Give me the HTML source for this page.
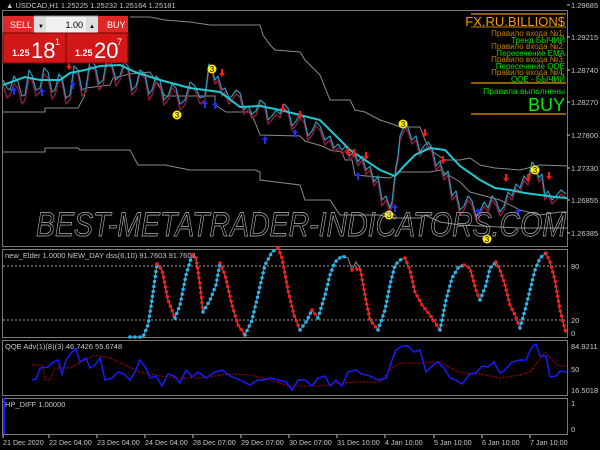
<!DOCTYPE html>
<html><head><meta charset="utf-8"><style>
html,body{margin:0;padding:0;background:#000;width:600px;height:450px;overflow:hidden;font-family:"Liberation Sans",sans-serif}
svg{position:absolute;left:0;top:0}
.t{font-family:"Liberation Sans","Noto Sans CJK SC",sans-serif}
</style></head><body>
<svg width="600" height="450" viewBox="0 0 600 450" xmlns="http://www.w3.org/2000/svg">
<rect width="600" height="450" fill="#000"/>
<g fill="none" stroke="#7a7a7a" stroke-width="1">
<rect x="2.5" y="10.5" width="565" height="236"/>
<rect x="2.5" y="249.5" width="565" height="88"/>
<rect x="2.5" y="340.5" width="565" height="55"/>
<rect x="2.5" y="398.5" width="565" height="36"/>
</g>
<text x="6" y="8" font-size="7.5" fill="#c8c8c8" class="t">▲ USDCAD,H1  1.25225 1.25232 1.25164 1.25181</text>
<g font-size="7.5" fill="#c8c8c8" class="t">
<text x="571" y="8">1.29685</text><text x="571" y="40">1.29215</text><text x="571" y="73">1.28740</text>
<text x="571" y="105">1.28270</text><text x="571" y="138">1.27800</text><text x="571" y="171">1.27330</text>
<text x="571" y="203">1.26855</text><text x="571" y="236">1.26385</text>
<text x="571" y="269">80</text><text x="571" y="323">20</text><text x="571" y="336">0</text>
<text x="571" y="349">84.9211</text><text x="571" y="372">50</text><text x="571" y="393">16.5018</text>
<text x="571" y="406">1</text><text x="571" y="432">0</text>
</g>
<g stroke="#c8c8c8"><line x1="567" y1="5" x2="570" y2="5"/><line x1="567" y1="37" x2="570" y2="37"/><line x1="567" y1="70" x2="570" y2="70"/><line x1="567" y1="102" x2="570" y2="102"/><line x1="567" y1="135" x2="570" y2="135"/><line x1="567" y1="168" x2="570" y2="168"/><line x1="567" y1="200" x2="570" y2="200"/><line x1="567" y1="233" x2="570" y2="233"/></g>
<g font-size="7.2" fill="#c8c8c8" class="t">
<text x="3" y="445">21 Dec 2020</text><text x="49" y="445">22 Dec 04:00</text><text x="97" y="445">23 Dec 04:00</text>
<text x="145" y="445">24 Dec 04:00</text><text x="193" y="445">28 Dec 07:00</text><text x="241" y="445">29 Dec 07:00</text>
<text x="289" y="445">30 Dec 07:00</text><text x="337" y="445">31 Dec 10:00</text><text x="385" y="445">4 Jan 10:00</text>
<text x="434" y="445">5 Jan 10:00</text><text x="482" y="445">6 Jan 10:00</text><text x="530" y="445">7 Jan 10:00</text>
</g>
<g stroke="#c8c8c8"><line x1="3" y1="435" x2="3" y2="438"/><line x1="49" y1="435" x2="49" y2="438"/><line x1="97" y1="435" x2="97" y2="438"/><line x1="145" y1="435" x2="145" y2="438"/><line x1="193" y1="435" x2="193" y2="438"/><line x1="241" y1="435" x2="241" y2="438"/><line x1="289" y1="435" x2="289" y2="438"/><line x1="337" y1="435" x2="337" y2="438"/><line x1="385" y1="435" x2="385" y2="438"/><line x1="434" y1="435" x2="434" y2="438"/><line x1="482" y1="435" x2="482" y2="438"/><line x1="530" y1="435" x2="530" y2="438"/></g>

<g fill="none" stroke="#8a8a8a" stroke-width="1">
<polyline points="3,112 45,112 45,108 78,108 84,97 86,88 110,85 113,78 130,74 150,72 165,96 200,96 215,96 215,105 226,112 250,112 255,122 260,135 300,136 305,141 322,146 330,150 342,152 345,160 352,160 355,175 390,178 400,172 430,172 440,170 460,182 470,192 500,200 520,210 540,215 560,212 567,212"/>
<polyline points="130,17 150,17 165,20 190,22 210,25 260,25 263,35 270,45 275,50 300,52 305,60 320,75 330,100 350,100 355,110 365,112 380,120 395,125 400,127 420,127 425,140 430,150 445,160 460,160 470,158 480,165 495,168 520,170 540,165 567,166"/>
<polyline points="3,152 45,152 45,148 78,148 80,150 130,150 138,165 165,165 190,170 255,170 260,172 260,180 300,185 305,200 330,200 340,215 380,215 390,218 420,218 425,215 440,222 460,225 480,226 520,228 567,228"/>
</g>
<g fill="none" stroke-linejoin="round">
<polyline stroke="#8b1a3a" stroke-width="1.5" points="3,85 7,98 10,95 14,84 18,88 22,104 25,100 29,78 32,80 36,96 40,92 44,74 48,78 52,99 55,95 59,80 62,82 66,104 70,100 74,72 78,75 82,96 86,92 90,66 95,70 99,90 103,85 107,62 112,68 116,86 120,80 124,66 128,70 132,95 136,90 140,74 145,78 149,100 152,95 156,82 160,85 164,105 168,100 172,88 176,92 180,110 185,105 190,86 195,90 200,104 205,100 209,68 212,72 215,84 218,80 222,96 225,92 229,104 232,100 236,94 240,97 244,114 248,110 252,118 256,115 260,104 265,108 268,124 272,120 276,114 280,118 284,108 288,112 292,130 296,125 300,118 304,122 308,140 312,135 316,126 320,130 325,145 330,140 334,152 338,148 342,154 346,150 350,160 354,155 358,166 362,160 366,174 370,170 374,186 378,180 382,206 386,200 390,212 392,206 396,170 398,160 400,140 402,135 406,128 408,132 412,144 416,140 420,156 424,150 428,146 432,152 436,170 440,165 444,180 448,175 452,200 456,195 460,215 464,210 468,200 472,205 476,220 480,215 484,206 488,212 492,200 496,205 500,216 504,210 508,196 512,200 516,188 520,192 524,180 528,185 532,166 536,172 539,182 542,178 545,200 548,195 552,204 556,200 561,194 566,198"/>
<polyline stroke="#2a9ab8" stroke-width="1.2" points="3,80 7,88 10,90 14,76 18,82 22,96 25,95 29,70 32,75 36,90 40,88 44,68 48,72 52,92 55,90 59,74 62,78 66,98 70,95 74,66 78,70 82,90 86,88 90,60 95,65 99,84 103,80 107,58 112,65 116,80 120,76 124,62 128,66 132,90 136,86 140,70 145,74 149,94 152,90 156,76 160,80 164,100 168,96 172,84 176,88 180,104 185,100 190,82 195,86 200,98 205,96 209,64 212,68 215,80 218,76 222,90 225,88 229,98 232,96 236,90 240,93 244,110 248,106 252,114 256,111 260,100 265,104 268,120 272,116 276,110 280,114 284,104 288,108 292,126 296,121 300,114 304,118 308,136 312,131 316,122 320,126 325,140 330,136 334,148 338,144 342,150 346,146 350,156 354,151 358,162 362,156 366,170 370,166 374,182 378,176 382,200 386,196 390,208 392,202 396,166 398,156 400,136 402,131 406,124 408,128 412,140 416,136 420,152 424,146 428,142 432,148 436,166 440,161 444,176 448,171 452,196 456,191 460,210 464,206 468,196 472,201 476,216 480,211 484,202 488,208 492,196 496,201 500,212 504,206 508,192 512,196 516,184 520,188 524,176 528,181 532,162 536,168 539,178 542,174 545,196 548,191 552,200 556,196 561,190 566,194"/>
</g>
<polyline fill="none" stroke="#20c8d0" stroke-width="2" points="3,85 25,77 40,80 60,80 70,73 85,70 100,66 120,65 135,72 160,80 190,88 220,92 240,107 260,106 280,110 300,115 320,120 335,135 350,150 365,160 380,170 395,176 405,165 415,155 430,148 445,150 460,166 480,180 495,188 510,190 525,193 540,195 555,197 567,198"/>
<g fill="#1e2cff">
<path d="M11,91 l3,-4 3,4 h-2 v4 h-2 v-4z"/><path d="M39,92 l3,-4 3,4 h-2 v4 h-2 v-4z"/><path d="M70,85 l3,-4 3,4 h-2 v4 h-2 v-4z"/>
<path d="M202,104 l3,-4 3,4 h-2 v4 h-2 v-4z"/><path d="M212,105 l3,-4 3,4 h-2 v4 h-2 v-4z"/><path d="M262,140 l3,-4 3,4 h-2 v4 h-2 v-4z"/>
<path d="M292,133 l3,-4 3,4 h-2 v4 h-2 v-4z"/><path d="M355,176 l3,-4 3,4 h-2 v4 h-2 v-4z"/><path d="M392,208 l3,-4 3,4 h-2 v4 h-2 v-4z"/>
<path d="M475,212 l3,-4 3,4 h-2 v4 h-2 v-4z"/><path d="M515,212 l3,-4 3,4 h-2 v4 h-2 v-4z"/>
</g>
<g fill="#ff1818">
<path d="M66,66 l3,4 3,-4 h-2 v-4 h-2 v4z"/><path d="M219,73 l3,4 3,-4 h-2 v-4 h-2 v4z"/><path d="M280,108 l3,4 3,-4 h-2 v-4 h-2 v4z"/>
<path d="M297,115 l3,4 3,-4 h-2 v-4 h-2 v4z"/><path d="M345,152 l3,4 3,-4 h-2 v-4 h-2 v4z"/><path d="M351,153 l3,4 3,-4 h-2 v-4 h-2 v4z"/>
<path d="M363,156 l3,4 3,-4 h-2 v-4 h-2 v4z"/><path d="M422,133 l3,4 3,-4 h-2 v-4 h-2 v4z"/><path d="M440,160 l3,4 3,-4 h-2 v-4 h-2 v4z"/>
<path d="M503,178 l3,4 3,-4 h-2 v-4 h-2 v4z"/><path d="M525,178 l3,4 3,-4 h-2 v-4 h-2 v4z"/><path d="M546,176 l3,4 3,-4 h-2 v-4 h-2 v4z"/>
</g>
<g fill="#ffee00">
<circle cx="212" cy="69" r="4.5"/><circle cx="177" cy="115" r="4.5"/><circle cx="403" cy="124" r="4.5"/><circle cx="389" cy="215" r="4.5"/>
<circle cx="487" cy="239" r="4.5"/><circle cx="535" cy="170" r="4.5"/>
</g>
<g fill="#000" font-size="8" class="t" text-anchor="middle">
<text x="212" y="72">3</text><text x="177" y="118">3</text><text x="403" y="127">3</text><text x="389" y="218">3</text><text x="487" y="242">3</text><text x="535" y="173">3</text>
</g>
<text x="36" y="236" font-size="34" font-style="italic" fill="none" stroke="#b8b8b8" stroke-width="0.7" textLength="530" lengthAdjust="spacingAndGlyphs" class="t">BEST-METATRADER-INDICATORS.COM</text>

<g stroke="#c08000" stroke-width="1.5">
<line x1="471" y1="14" x2="566" y2="14"/><line x1="471" y1="83" x2="566" y2="83"/><line x1="471" y1="114" x2="566" y2="114"/>
<line x1="471" y1="27" x2="566" y2="27" stroke-width="1"/>
</g>
<g class="t" text-anchor="end">
<text x="565" y="26" font-size="13" fill="#ff9900">FX.RU.BILLION$</text>
<text x="565" y="36" font-size="8" fill="#c08000">Правило входа №1:</text>
<text x="565" y="43" font-size="8" fill="#00e000">Тренд БЫЧИЙ</text>
<text x="565" y="49" font-size="8" fill="#c08000">Правило входа №2:</text>
<text x="565" y="56" font-size="8" fill="#00e000">Пересечение EMA</text>
<text x="565" y="62" font-size="8" fill="#c08000">Правило входа №3:</text>
<text x="565" y="69" font-size="8" fill="#00e000">Пересечение QQE</text>
<text x="565" y="75" font-size="8" fill="#c08000">Правило входа №4:</text>
<text x="565" y="82" font-size="8" fill="#00e000">QQE - БЫЧИЙ</text>
<text x="565" y="94" font-size="8.5" fill="#00e000">Правила выполнены</text>
<text x="565" y="111" font-size="18" fill="#00f000">BUY</text>
</g>

<rect x="3" y="16" width="31" height="17" fill="#e02828"/>
<rect x="34" y="16" width="64" height="17" fill="#f0f0f0" stroke="#888"/>
<rect x="34" y="17" width="12" height="15" fill="#ddd"/><rect x="86" y="17" width="12" height="15" fill="#ddd"/>
<rect x="98" y="16" width="30" height="17" fill="#e02828"/>
<rect x="3" y="33" width="63" height="30" fill="#d01818" stroke="#7a0000"/>
<rect x="66" y="33" width="62" height="30" fill="#d01818" stroke="#7a0000"/>
<g class="t" fill="#fff">
<text x="10" y="28" font-size="9">SELL</text><text x="107" y="28" font-size="9">BUY</text>
<text x="38" y="28" font-size="6" fill="#000">▼</text><text x="89" y="28" font-size="6" fill="#000">▲</text>
<text x="83" y="28" font-size="9" fill="#000" text-anchor="end">1.00</text>
<text x="12" y="56" font-size="9" font-weight="bold">1.25</text><text x="31" y="58" font-size="22">18</text><text x="55" y="45" font-size="9">1</text>
<text x="75" y="56" font-size="9" font-weight="bold">1.25</text><text x="94" y="58" font-size="22">20</text><text x="117" y="45" font-size="9">7</text>
</g>

<text x="5" y="258" font-size="7.5" fill="#c8c8c8" class="t">new_Elder 1.0000  NEW_DAY dss(6,10) 91.7603 91.7603</text>
<g stroke="#aaa" stroke-dasharray="2,2"><line x1="3" y1="266" x2="567" y2="266"/><line x1="3" y1="320" x2="567" y2="320"/></g>
<polyline fill="none" stroke="#888" stroke-width="1" points="130,337 143,337 148,325 152,300 157,264 162,270 168,300 175,318 180,305 186,275 192,255 196,258 200,285 203,312 210,300 216,285 220,263 225,275 232,305 238,325 245,335 252,320 258,295 265,265 272,252 278,248 282,258 288,290 294,315 300,330 306,322 312,310 318,318 325,295 330,275 335,262 342,256 348,258 352,270 356,262 360,268 365,295 370,320 378,330 385,310 390,285 395,265 400,260 405,258 410,270 415,292 422,305 430,315 440,330 446,300 452,278 458,268 464,265 470,268 476,290 480,300 486,285 490,268 496,262 500,270 505,285 510,305 515,315 520,328 525,310 530,290 535,270 540,258 546,253 550,262 555,280 560,310 566,333"/>
<g fill="none" stroke-linecap="round" stroke-width="3.5" stroke-dasharray="0,5">
<polyline stroke="#20b8f0" points="130,337 143,337 148,325 152,300 157,264"/>
<polyline stroke="#ff1a1a" points="157,264 162,270 168,300 175,318"/>
<polyline stroke="#20b8f0" points="175,318 180,305 186,275 192,255"/>
<polyline stroke="#ff1a1a" points="192,255 196,258 200,285 203,312"/>
<polyline stroke="#20b8f0" points="203,312 210,300 216,285 220,263"/>
<polyline stroke="#ff1a1a" points="220,263 225,275 232,305 238,325 245,335"/>
<polyline stroke="#20b8f0" points="245,335 252,320 258,295 265,265 272,252 278,248"/>
<polyline stroke="#ff1a1a" points="278,248 282,258 288,290 294,315 300,330"/>
<polyline stroke="#20b8f0" points="300,330 306,322 312,310"/>
<polyline stroke="#ff1a1a" points="312,310 318,318"/>
<polyline stroke="#20b8f0" points="318,318 325,295 330,275 335,262 342,256 348,258"/>
<polyline stroke="#ff1a1a" points="352,270 360,268 365,295 370,320 378,330"/>
<polyline stroke="#20b8f0" points="378,330 385,310 390,285 395,265 400,260 405,258"/>
<polyline stroke="#ff1a1a" points="405,258 410,270 415,292 422,305 430,315 440,330"/>
<polyline stroke="#20b8f0" points="440,330 446,300 452,278 458,268 464,265"/>
<polyline stroke="#ff1a1a" points="464,265 470,268 476,290 480,300"/>
<polyline stroke="#20b8f0" points="480,300 486,285 490,268 496,262"/>
<polyline stroke="#ff1a1a" points="496,262 500,270 505,285 510,305 515,315 520,328"/>
<polyline stroke="#20b8f0" points="520,328 525,310 530,290 535,270 540,258 546,253"/>
<polyline stroke="#ff1a1a" points="546,253 550,262 555,280 560,310 566,333"/>
</g>

<text x="5" y="349" font-size="7.5" fill="#c8c8c8" class="t">QQE Adv(1)(8)(3) 46.7426 55.6748</text>
<polyline fill="none" stroke="#b00000" stroke-width="1" stroke-dasharray="2,1.5" points="32,365 42,365 45,380 50,380 55,368 70,368 85,360 95,355 110,358 125,365 140,372 160,376 180,378 200,378 215,376 230,374 250,375 270,380 290,386 320,386 340,383 360,382 380,382 392,368 400,363 420,363 440,362 450,368 462,373 480,374 500,378 520,375 530,372 545,352 558,366 567,366"/>
<polyline fill="none" stroke="#1a1aff" stroke-width="1.5" points="32,380 36,379 40,368 48,367 52,363 58,360 62,374 66,360 72,352 76,349 80,362 86,358 90,368 95,365 100,358 105,380 112,378 118,372 124,374 130,380 135,372 140,360 146,368 150,378 156,376 162,386 168,374 174,376 180,383 186,370 192,377 198,372 206,378 215,372 222,370 230,376 240,380 250,385 258,380 264,380 270,378 278,380 286,382 292,390 298,380 305,380 312,386 318,378 325,376 330,386 336,380 342,386 348,372 356,370 362,374 370,376 378,380 386,378 392,360 396,350 402,346 408,346 414,352 420,350 426,372 432,366 438,362 444,368 450,378 456,380 462,384 470,374 476,373 482,366 488,367 494,362 500,373 505,370 512,362 520,360 526,360 532,347 536,344 540,356 546,356 550,377 556,376 560,371 567,372"/>
<text x="5" y="407" font-size="7.5" fill="#c8c8c8" class="t">HP_DIFF 1.00000</text>
<rect x="3" y="398" width="2" height="36" fill="#1a1aff"/>
</svg>
</body></html>
